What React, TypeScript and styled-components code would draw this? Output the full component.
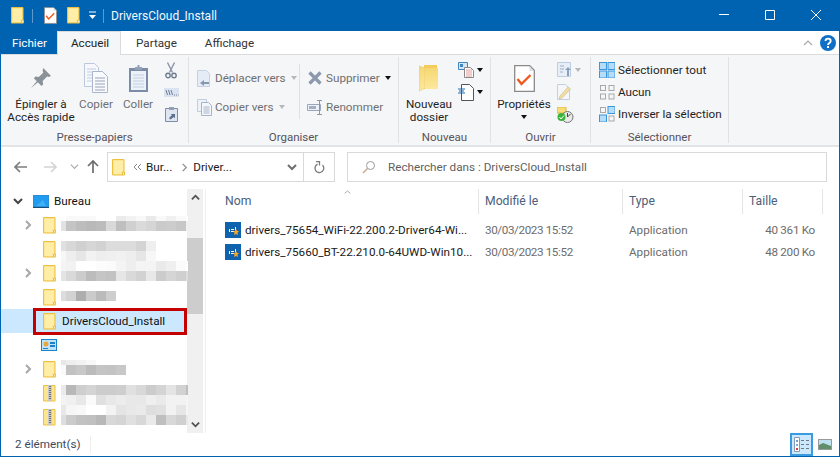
import React from 'react';
import styled, { createGlobalStyle } from 'styled-components';

const Global = createGlobalStyle`
  html, body { margin: 0; padding: 0; background: #fff; }
  body { font-family: "Roboto", "Open Sans", "Liberation Sans", sans-serif; font-size: 11.7px; color: #1a1a1a; }
  svg { display: block; flex: none; }
`;

const Window = styled.div`
  width: 840px;
  height: 457px;
  box-sizing: border-box;
  border: 1px solid #0063b1;
  border-top: 0;
  display: flex;
  flex-direction: column;
  overflow: hidden;
  background: #fff;
`;

const Gap = styled.div`
  width: ${p => p.$w}px;
  flex: none;
`;

/* title bar */
const TitleBar = styled.div`
  height: 31px;
  flex: none;
  background: #0063b1;
  display: flex;
  align-items: center;
  padding-left: 10px;
  color: #fff;
`;
const QuickSep = styled.div`
  width: 1px;
  height: 14px;
  background: #5d9ad0;
  margin: ${p => p.$margin};
`;
const TitleText = styled.div`
  font-size: 12px;
  margin-left: 7px;
  color: #f4f8fc;
`;
const WindowControls = styled.div`
  margin-left: auto;
  display: flex;
  height: 100%;
`;
const ControlBtn = styled.div`
  width: 46px;
  height: 100%;
  display: flex;
  align-items: center;
  justify-content: center;
  padding-bottom: 2px;
  box-sizing: border-box;
`;

/* tabs */
const TabRow = styled.div`
  height: 24px;
  flex: none;
  box-sizing: border-box;
  border-bottom: 1px solid #dadbdc;
  display: flex;
  align-items: stretch;
`;
const FileTab = styled.div`
  width: 56px;
  height: 23px;
  background: #0063b1;
  color: #fff;
  padding-left: 11px;
  box-sizing: border-box;
  line-height: 24px;
`;
const Tab = styled.div`
  padding: 0 14px;
  line-height: 24px;
  color: #333;
  height: 23px;
  box-sizing: border-box;
  ${p => p.$active && `
    height: 24px;
    background: #f5f6f7;
    border: 1px solid #dadbdc;
    border-bottom: 0;
    color: #222;
    width: 64px;
    padding: 0 13px;
    line-height: 23px;
    margin-right: 1px;
  `}
`;
const TabTools = styled.div`
  margin-left: auto;
  display: flex;
  align-items: center;
  gap: 7px;
  padding-right: 3px;
`;

/* ribbon */
const Ribbon = styled.div`
  height: 92px;
  flex: none;
  box-sizing: border-box;
  background: #f5f6f7;
  border-bottom: 2px solid #e3e4e5;
  display: flex;
  padding-top: 2px;
`;
const Group = styled.div`
  width: ${p => p.$width}px;
  height: 86px;
  box-sizing: border-box;
  border-right: 1px solid #e1e2e3;
  display: flex;
  flex-direction: column;
  flex: none;
`;
const GroupBody = styled.div`
  flex: 1;
  display: flex;
  min-height: 0;
  padding-left: ${p => p.$pad || 0}px;
`;
const GroupLabel = styled.div`
  height: 12px;
  text-align: center;
  color: #57535a;
  line-height: 13px;
  font-size: 11.5px;
`;
const BigButton = styled.div`
  width: ${p => p.$width}px;
  flex: none;
  display: flex;
  flex-direction: column;
  align-items: center;
  text-align: center;
  line-height: 13px;
  color: ${p => (p.$off ? '#6f6f72' : '#1f1f1f')};
`;
const BigIcon = styled.div`
  height: 39px;
  margin-bottom: 2px;
  display: flex;
  align-items: center;
  justify-content: center;
  padding-top: 3px;
  box-sizing: border-box;
  width: 100%;
`;
const Caret = styled.div`
  width: 0;
  height: 0;
  border: 3.5px solid transparent;
  border-top: 4px solid ${p => (p.$off ? '#b5b8bc' : '#111')};
  border-bottom: 0;
  margin: ${p => p.$margin || '0 0 0 5px'};
`;
const ToolStack = styled.div`
  display: flex;
  flex-direction: column;
  width: ${p => (p.$width ? `${p.$width}px` : 'auto')};
  padding-top: ${p => p.$top}px;
  gap: ${p => p.$gap}px;
  align-items: ${p => p.$align || 'flex-start'};
  ${p => p.$divide && `
    height: 55px;
    margin-top: 7px;
    padding-top: 5px;
    gap: 11px;
    border-right: 1px solid #dfe0e1;
    box-sizing: border-box;
  `}
`;
const SmallTool = styled.div`
  display: flex;
  align-items: center;
  height: ${p => p.$h || 18}px;
  padding-left: ${p => p.$indent || 0}px;
  color: ${p => (p.$off ? '#6f6f72' : '#1f1f1f')};
  white-space: nowrap;
`;
const ToolLabel = styled.span`
  margin-left: ${p => p.$gap ?? 3}px;
`;

/* address bar */
const AddressRow = styled.div`
  height: 42px;
  flex: none;
  display: flex;
  align-items: flex-start;
  padding-top: 5px;
  box-sizing: border-box;
`;
const NavArrows = styled.div`
  width: 106px;
  height: 29px;
  flex: none;
  display: flex;
  align-items: center;
  padding-left: 13px;
  box-sizing: border-box;
`;
const AddressBox = styled.div`
  width: 228px;
  height: 30px;
  flex: none;
  box-sizing: border-box;
  border: 1px solid #d9d9d9;
  display: flex;
  align-items: center;
  padding-left: 4px;
  color: #1a1a1a;
`;
const Crumb = styled.span`
  margin-left: ${p => p.$left}px;
  white-space: nowrap;
`;
const RefreshCell = styled.div`
  width: 30px;
  height: 100%;
  margin-left: auto;
  border-left: 1px solid #d9d9d9;
  display: flex;
  align-items: center;
  justify-content: center;
`;
const SearchBox = styled.div`
  width: 480px;
  height: 30px;
  margin-left: 12px;
  box-sizing: border-box;
  border: 1px solid #d9d9d9;
  display: flex;
  align-items: center;
  padding-left: 14px;
  color: #5f5f5f;
`;

/* main */
const Main = styled.div`
  flex: 1;
  display: flex;
  min-height: 0;
`;
const NavPane = styled.div`
  width: 205px;
  flex: none;
  box-sizing: border-box;
  border-right: 1px solid #efefef;
  display: flex;
  padding-right: 2px;
`;
const NavList = styled.div`
  width: 186px;
  flex: none;
`;
const NavRow = styled.div`
  position: relative;
  height: 24px;
  display: flex;
  align-items: center;
  padding-left: ${p => p.$indent}px;
  background: ${p => (p.$selected ? '#cce8ff' : 'transparent')};
  color: #111;
`;
const Twisty = styled.div`
  width: 14px;
  height: 14px;
  margin-right: 8px;
  flex: none;
  display: flex;
  align-items: center;
  justify-content: center;
`;
const NavLabel = styled.span`
  margin-left: ${p => p.$left}px;
  white-space: nowrap;
`;
const RedFrame = styled.div`
  position: absolute;
  left: 32px;
  top: -1px;
  width: 154px;
  height: 27px;
  box-sizing: border-box;
  border: 3px solid #c40000;
`;
const Mosaic = styled.div`
  align-self: flex-start;
  margin-top: ${p => p.$top}px;
  margin-left: 5px;
  width: 127px;
  flex: none;
  overflow: hidden;
`;
const MosaicLine = styled.div`
  display: flex;
  height: ${p => p.$h || 10}px;
`;
const MosaicCell = styled.div`
  width: 10px;
  flex: none;
  background: rgb(${p => p.$v}, ${p => p.$v}, ${p => p.$v});
  &:first-child { width: 5px; }
`;
const ScrollBar = styled.div`
  width: 16px;
  flex: none;
  background: #f0f0f0;
  display: flex;
  flex-direction: column;
  align-items: center;
`;
const ScrollEnd = styled.div`
  height: 17px;
  flex: none;
  display: flex;
  align-items: center;
  justify-content: center;
`;
const ScrollTrack = styled.div`
  flex: 1;
  width: 100%;
  padding-top: 32px;
  box-sizing: border-box;
`;
const ScrollThumb = styled.div`
  height: 76px;
  background: #cdcdcd;
`;

const FilePane = styled.div`
  position: relative;
  flex: 1;
  padding-left: 12px;
`;
const COLUMNS = '261px 144px 120px 80px';
const HeaderRow = styled.div`
  display: grid;
  grid-template-columns: ${COLUMNS};
  height: 25px;
  margin-bottom: 5px;
`;
const HeaderCell = styled.div`
  padding-left: ${p => p.$pad || 6}px;
  border-right: 1px solid #e5e5e5;
  line-height: 25px;
  color: #4c607a;
  font-size: 12.2px;
`;
const SortCaret = styled.div`
  position: absolute;
  left: 137px;
  top: 0;
`;
const FileRow = styled.div`
  display: grid;
  grid-template-columns: ${COLUMNS};
  height: 22px;
  align-items: center;
  color: #6d6d6d;
`;
const FileName = styled.div`
  display: flex;
  align-items: center;
  padding-left: 7px;
  color: #1a1a1a;
  white-space: nowrap;
`;
const FileCell = styled.div`
  padding-left: 6px;
  white-space: nowrap;
  letter-spacing: ${p => p.$tight || 0}px;
`;
const SizeCell = styled.div`
  text-align: right;
  padding-right: 8px;
  letter-spacing: -0.3px;
`;

/* status bar */
const StatusBar = styled.div`
  height: 23px;
  flex: none;
  display: flex;
  align-items: center;
  padding-left: 14px;
  color: #3f4a5c;
`;
const StatusText = styled.div`
  width: 75px;
  height: 17px;
  line-height: 17px;
  border-right: 1px solid #eee;
`;
const ViewButtons = styled.div`
  margin-left: auto;
  height: 100%;
  display: flex;
  align-items: center;
  padding-right: 3px;
`;
const ViewButton = styled.div`
  width: 23px;
  height: 23px;
  box-sizing: border-box;
  display: flex;
  align-items: center;
  justify-content: center;
  ${p => p.$on && 'background: #cce8ff; border: 2px solid #3a9be0;'}
`;

/* icons */
const Folder = () => (
  <svg width={13} height={17} viewBox="0 0 13 17">
    <path d="M.5.5h11.500v12.500h-1v3H.5z" fill="#fde58f" stroke="#ecc040" />
    <path d="M2 2h9v10H9.500v3H2z" fill="#ffeea8" />
    <path d="M10.500 13.500v2.500h2v-3z" fill="#fff3c4" stroke="#ecc040" />
  </svg>
);
const ZipFolder = () => (
  <svg width={13} height={17} viewBox="0 0 13 17">
    <path d="M.5.5h11.500v15.500H.5z" fill="#fde58f" stroke="#ecc040" />
    <path d="M5 0h4v16H5z" fill="#c9c9c9" />
    <path d="M6 1h2v1H6zM6 3h2v1H6zM6 5h2v1H6zM6 7h2v1H6zM6 9h2v1H6zM6 11h2v1H6zM6 13h2v1H6z" fill="#6f6f6f" />
  </svg>
);
const CheckPage = ({ w = 13, h = 17 }: { w?: number; h?: number }) => (
  <svg width={w} height={h} viewBox="0 0 21 27">
    <path d="M.7.7h15l4.600 4.600v21H.7z" fill="#fff" stroke="#8a8a8a" strokeWidth="1.300" />
    <path d="M15.500 1v5h4.500z" fill="#ddd" />
    <path d="M3.500 14l4 5 9-9" fill="none" stroke="#f0591e" strokeWidth="2.400" />
  </svg>
);
const DropGlyph = () => (
  <svg width={9} height={10} viewBox="0 0 9 10">
    <path d="M1 1h7" stroke="#fff" />
    <path d="M1 4h7L4.500 8z" fill="#fff" />
  </svg>
);
const Chevron = ({ d, color = '#808080', w = 10, h = 10, sw = 2 }: { d: string; color?: string; w?: number; h?: number; sw?: number }) => (
  <svg width={w} height={h} viewBox="0 0 10 10">
    <path d={d} fill="none" stroke={color} strokeWidth={sw} />
  </svg>
);
const PinIcon = () => (
  <svg width={22} height={22} viewBox="0 0 20 20">
    <path d="M12 1l7 7-1.500 1.200-2-.5-4 4 .5 3-1.500 1.500-7-7L5 8.700l3 .5 4-4-.5-2z" fill="#8a9298" />
    <path d="M6.500 12.500L1 19l6.500-5.300z" fill="#8a9298" />
  </svg>
);
const CopyIcon = () => (
  <svg width={24} height={30} viewBox="0 0 24 30">
    <path d="M.5.5h10l4 4v19H.5z" fill="#f5f8fc" stroke="#bcc8da" />
    <path d="M3 6h9M3 9h9M3 12h9M3 15h9M3 18h9" stroke="#c6cedb" />
    <path d="M8.500 8.500h10l5 5v16h-15z" fill="#f8fafd" stroke="#a9b6cb" />
    <path d="M11 15h10M11 18h10M11 21h10M11 24h10M11 27h10" stroke="#98a4b8" />
  </svg>
);
const PasteIcon = () => (
  <svg width={21} height={29} viewBox="0 0 21 29">
    <path d="M1 4h19v24H1z" fill="#7b8ca8" />
    <path d="M3 7h15v19H3z" fill="#edf1f8" />
    <path d="M5 11h11M5 14h11M5 17h11M5 20h11M5 23h11" stroke="#c3cfe1" />
    <path d="M7 3h2.500V1h2v2H14v3H7z" fill="#93a0b5" />
  </svg>
);
const ScissorsIcon = () => (
  <svg width={12} height={17} viewBox="0 0 12 17">
    <path d="M2.500 .5l5 10M9.500 .5l-5 10" stroke="#8794a8" strokeWidth="1.400" fill="none" />
    <circle cx="3" cy="13.500" r="2.200" fill="none" stroke="#6f7d92" strokeWidth="1.400" />
    <circle cx="9" cy="13.500" r="2.200" fill="none" stroke="#6f7d92" strokeWidth="1.400" />
  </svg>
);
const PathIcon = () => (
  <svg width={15} height={9} viewBox="0 0 15 9">
    <path d="M0 0h15v9H0z" fill="#dbe3f0" />
    <path d="M2 2l1.500 5M4.500 2L6 7M7 2l1.500 5" stroke="#6e7f99" />
    <path d="M10 7h1M12 7h1M14 7h.5" stroke="#6e7f99" />
  </svg>
);
const ShortcutIcon = () => (
  <svg width={13} height={16} viewBox="0 0 13 16">
    <path d="M.5 2.500h12v13H.5z" fill="#dfe6f1" stroke="#7e8da6" />
    <path d="M4 1h5v3H4z" fill="#93a0b5" />
    <path d="M4 12l3-3-1.500-1H10v4.500L8.800 11 5.500 13.500z" fill="#5c6f8d" />
  </svg>
);
const MoveIcon = () => (
  <svg width={13} height={17} viewBox="0 0 13 17">
    <path d="M.5.5h9l3 3v13H.5z" fill="#e6ecf6" stroke="#c6d1e2" />
    <path d="M12 12H7V10L3 13l4 3v-2h5z" fill="#8798b2" />
  </svg>
);
const CopyToIcon = () => (
  <svg width={15} height={17} viewBox="0 0 15 17">
    <path d="M.5.5h9v12H.5z" fill="#eef2f8" stroke="#c2cddd" />
    <path d="M4.500 3.500h7l3 3v10h-10z" fill="#f3f6fa" stroke="#a7b3c6" />
    <path d="M6.500 8h6M6.500 10h6M6.500 12h6M6.500 14h6" stroke="#a9b5c8" />
  </svg>
);
const DeleteIcon = () => (
  <svg width={14} height={14} viewBox="0 0 14 14">
    <path d="M1.500 1.500l11 11M12.500 1.500l-11 11" stroke="#8c99ad" strokeWidth="3.200" />
  </svg>
);
const RenameIcon = () => (
  <svg width={16} height={15} viewBox="0 0 16 15">
    <path d="M.5 4.500h13v6H.5z" fill="#eef2f8" stroke="#9aa7bb" />
    <path d="M2 6h7v3H2z" fill="#a3afc2" />
    <path d="M10 .5h5M10 14.500h5M12.500 .5v14" stroke="#8896ab" />
  </svg>
);
const NewFolderIcon = () => (
  <svg width={20} height={28} viewBox="0 0 20 28">
    <defs>
      <linearGradient id="nf" x1="0" y1="0" x2="0" y2="1">
        <stop offset="0" stopColor="#f6d873" />
        <stop offset="1" stopColor="#fce79c" />
      </linearGradient>
    </defs>
    <path d="M5 1h13v24H5z" fill="#f3cc5c" />
    <path d="M0 2l6 2v20l-6 3z" fill="url(#nf)" stroke="#e6c25a" strokeWidth=".5" />
    <path d="M6 4l13 0v21H6z" fill="url(#nf)" />
  </svg>
);
const NewItemIcon = () => (
  <svg width={16} height={16} viewBox="0 0 16 16">
    <path d="M.5.500h9v7H.5z" fill="#d7e6f4" stroke="#3f87c0" />
    <path d="M2 2h3v3H2z" fill="#3f87c0" />
    <path d="M6.500 5.500h6l3 3v7h-9z" fill="#fff" stroke="#888" />
    <path d="M8 8h6M8 10h6M8 12h6M8 14h6" stroke="#e29a9a" />
  </svg>
);
const EasyAccessIcon = () => (
  <svg width={16} height={17} viewBox="0 0 16 17">
    <path d="M3.500.5h8l4 4v12h-12z" fill="#fff" stroke="#555" />
    <path d="M0 5h7M1 7h5M0 9h7" stroke="#1f6fb5" />
  </svg>
);
const OpenIcon = () => (
  <svg width={14} height={15} viewBox="0 0 14 15">
    <path d="M.5.500h13v14H.5z" fill="#e8eef7" stroke="#bfcde0" />
    <path d="M3 4h4M3 7h4M3 10h3" stroke="#9eb0c9" />
    <path d="M10 14V8H8l3-3 3 3h-2v6z" fill="#8aa0bf" />
  </svg>
);
const EditIcon = () => (
  <svg width={14} height={16} viewBox="0 0 14 16">
    <path d="M.5.500h8l4 4v11H.5z" fill="#f4f6fa" stroke="#c4cfdf" />
    <path d="M3 12l8-9 2.500 2L5 14l-3 1z" fill="#f2dfa0" stroke="#c7b888" strokeWidth=".6" />
  </svg>
);
const HistoryIcon = () => (
  <svg width={17} height={16} viewBox="0 0 17 16">
    <path d="M0 0h9v6H0z" fill="#f7dc77" stroke="#d9b93d" />
    <circle cx="10.500" cy="10" r="5.500" fill="#e9e9e9" stroke="#777" />
    <path d="M10.500 10l3-3M10.500 6v4" stroke="#444" />
    <circle cx="4.500" cy="10" r="4" fill="#3cb43c" />
    <path d="M2.500 10l1.500 2 3-3.500" stroke="#fff" fill="none" />
  </svg>
);
const GridIcon = ({ on }: { on: boolean[] }) => (
  <svg width={16} height={16} viewBox="0 0 16 16">
    {[[0, 0], [8.500, 0], [0, 8.500], [8.500, 8.500]].map(([x, y], i) => (
      <rect
        key={i}
        x={x + (on[i] ? 0.5 : 1.5)}
        y={y + (on[i] ? 0.5 : 1.5)}
        width={on[i] ? 7 : 5}
        height={on[i] ? 7 : 5}
        fill={on[i] ? '#b5dcf8' : '#f5f6f7'}
        stroke={on[i] ? '#3a96dd' : '#a9a9a9'}
      />
    ))}
  </svg>
);
const HelpIcon = () => (
  <svg width={16} height={16} viewBox="0 0 16 16">
    <circle cx="8" cy="8" r="8" fill="#0f6fc6" />
    <path d="M5.500 6c0-3.200 5.200-3.200 5.200 0 0 2-2.700 1.800-2.700 4" stroke="#fff" strokeWidth="1.800" fill="none" />
    <path d="M7 11h2v2H7z" fill="#fff" />
  </svg>
);
const BackIcon = ({ color, flip }: { color: string; flip?: boolean }) => (
  <svg width={13} height={12} viewBox="0 0 13 12">
    <path d={flip ? 'M7 1l5 5-5 5M12 6H0' : 'M6 1L1 6l5 5M1 6h12'} fill="none" stroke={color} strokeWidth="1.700" />
  </svg>
);
const UpIcon = () => (
  <svg width={12} height={13} viewBox="0 0 12 13">
    <path d="M1 6l5-5 5 5M6 1v12" fill="none" stroke="#6d6d6d" strokeWidth="1.700" />
  </svg>
);
const RefreshIcon = () => (
  <svg width={11} height={13} viewBox="0 0 11 13">
    <path d="M8.500 4A4.400 4.400 0 1 1 3.500 3.200" fill="none" stroke="#7a7a7a" strokeWidth="1.300" />
    <path d="M2 .5h3.500v4" fill="none" stroke="#7a7a7a" strokeWidth="1.300" />
  </svg>
);
const SearchIcon = () => (
  <svg width={14} height={14} viewBox="0 0 14 14">
    <circle cx="8.500" cy="5.500" r="4" fill="none" stroke="#9a9a9a" />
    <path d="M5.500 8.500L1 13" stroke="#c9a27f" strokeWidth="1.200" />
  </svg>
);
const DesktopIcon = () => (
  <svg width={16} height={13} viewBox="0 0 16 13">
    <path d="M0 0h16v12H0z" fill="#2a8fd8" />
    <path d="M1 1h14v10H1z" fill="#1f9bf0" />
    <path d="M3 11l7-6 3 6z" fill="#3fb0f7" />
    <path d="M0 12.500h16" stroke="#14507e" />
  </svg>
);
const PanelIcon = () => (
  <svg width={16} height={12} viewBox="0 0 16 12">
    <path d="M0 0h16v12H0z" fill="#1b82c9" />
    <path d="M1 1h14v10H1z" fill="#bfe3f8" />
    <circle cx="5" cy="5" r="2.500" fill="#e9a73b" />
    <path d="M9 3h5v2H9zM9 6h5v2H9zM2 9h5v1H2z" fill="#1b82c9" />
  </svg>
);
const AppIcon = () => (
  <svg width={16} height={16} viewBox="0 0 16 16">
    <path d="M0 0h16v16H0z" fill="#0f62ad" />
    <path d="M4 7h1v3H4zM6 7h3v1H6zM6 9h3v1H6zM10 5h1v3h-1z" fill="#fff" />
    <path d="M11 7l1 1.800 2 .4-1.500 1.400.5 2.400-2-1-2 1 .5-2.400L8 9.200l2-.4z" fill="#f3a52c" />
  </svg>
);
const DetailsIcon = () => (
  <svg width={15} height={15} viewBox="0 0 15 15">
    <path d="M.5.5h5v14h-5z" fill="#fff" stroke="#8d9aae" />
    <path d="M2 3h2v2H2z" fill="#6aa0d8" />
    <path d="M2 7h2v2H2z" fill="#7fb0e0" />
    <path d="M2 11h2v2H2z" fill="#c44" />
    <path d="M7 3.500h3M12 3.500h3M7 7.500h3M12 7.500h3M7 11.500h3M12 11.500h3" stroke="#6f7884" />
  </svg>
);
const LargeViewIcon = () => (
  <svg width={14} height={11} viewBox="0 0 14 11">
    <path d="M0 0h14v11H0z" fill="#9a9a9a" />
    <path d="M1 1h12v9H1z" fill="#bfe0ee" />
    <path d="M1 6l4-2 8 3v3H1z" fill="#5f8f6a" />
  </svg>
);

/* blurred entries of the tree */
const blurred: { top: number; lines: { h?: number; cells: number[] }[] }[] = [
  { top: 3, lines: [
    { h: 5, cells: [255, 249, 249, 249, 255, 255, 235, 242, 248, 234, 249, 240, 249, 255] },
    { cells: [226, 196, 189, 185, 188, 217, 191, 208, 218, 213, 202, 204, 199, 240] },
  ] },
  { top: 4, lines: [
    { cells: [224, 216, 208, 214, 210, 220, 220, 220, 212, 239] },
    { cells: [247, 238, 230, 242, 238, 239, 241, 238, 230, 247] },
  ] },
  { top: 0, lines: [
    { cells: [244, 242, 255, 255, 252, 251, 244, 238, 244, 244, 234, 239, 251, 255] },
    { cells: [228, 217, 204, 188, 197, 194, 230, 217, 210, 232, 204, 213, 207, 220] },
  ] },
  { top: 6, lines: [{ cells: [221, 210, 174, 203, 187, 206] }] },
];
const blurredLower: typeof blurred = [
  { top: 3, lines: [
    { h: 5, cells: [232, 238, 242, 248] },
    { cells: [250, 194, 200, 187, 196, 195, 200] },
  ] },
  { top: 4, lines: [
    { cells: [234, 184, 206, 212, 204, 204, 206, 224, 216, 204, 212, 228, 210, 190] },
    { cells: [243, 240, 232, 250, 224, 232, 236, 232, 232, 239, 234, 242, 242, 245] },
  ] },
  { top: 0, lines: [
    { cells: [232, 246, 248, 255, 255, 243, 228, 232, 234, 222, 224, 242, 230, 245] },
    { cells: [222, 203, 194, 192, 184, 216, 213, 224, 216, 234, 191, 216, 208, 232] },
  ] },
];

const Blur = ({ item }: { item: (typeof blurred)[number] }) => (
  <Mosaic $top={item.top}>
    {item.lines.map((line, i) => (
      <MosaicLine key={i} $h={line.h}>
        {line.cells.map((v, j) => <MosaicCell key={j} $v={v} />)}
      </MosaicLine>
    ))}
  </Mosaic>
);

const RIGHT = 'M3 1l4 4-4 4';
const DOWN = 'M1 3l4 4 4-4';

const files = [
  { name: 'drivers_75654_WiFi-22.200.2-Driver64-Wi...', date: '30/03/2023 15:52', size: '40 361 Ko' },
  { name: 'drivers_75660_BT-22.210.0-64UWD-Win10...', date: '30/03/2023 15:52', size: '48 200 Ko' },
];

export default function App(): React.ReactElement {
  return (
    <Window>
      <Global />
      <TitleBar>
        <Folder />
        <QuickSep $margin="0 11px 0 8px" />
        <CheckPage />
        <Gap $w={10} />
        <Folder />
        <Gap $w={8} />
        <DropGlyph />
        <QuickSep $margin="0 0 0 6px" />
        <TitleText>DriversCloud_Install</TitleText>
        <WindowControls>
          <ControlBtn>
            <svg width={10} height={1}><path d="M0 .5h10" stroke="#fff" /></svg>
          </ControlBtn>
          <ControlBtn>
            <svg width={10} height={10}><path d="M.5.5h9v9h-9z" fill="none" stroke="#fff" /></svg>
          </ControlBtn>
          <ControlBtn>
            <svg width={10} height={10}><path d="M0 0l10 10M10 0L0 10" stroke="#fff" /></svg>
          </ControlBtn>
        </WindowControls>
      </TitleBar>

      <TabRow>
        <FileTab>Fichier</FileTab>
        <Tab $active>Accueil</Tab>
        <Tab>Partage</Tab>
        <Tab>Affichage</Tab>
        <TabTools>
          <Chevron d="M1 7l4-4 4 4" color="#a9a9a9" sw={1.2} />
          <HelpIcon />
        </TabTools>
      </TabRow>

      <Ribbon>
        <Group $width={188}>
          <GroupBody $pad={4}>
            <BigButton $width={72}>
              <BigIcon><PinIcon /></BigIcon>
              Épingler à<br />Accès rapide
            </BigButton>
            <BigButton $width={38} $off>
              <BigIcon><CopyIcon /></BigIcon>
              Copier
            </BigButton>
            <BigButton $width={46} $off>
              <BigIcon><PasteIcon /></BigIcon>
              Coller
            </BigButton>
            <ToolStack $top={5} $gap={9} $width={20} $align="center">
              <ScissorsIcon />
              <PathIcon />
              <ShortcutIcon />
            </ToolStack>
          </GroupBody>
          <GroupLabel>Presse-papiers</GroupLabel>
        </Group>

        <Group $width={210}>
          <GroupBody $pad={8}>
            <ToolStack $divide $width={103}>
              <SmallTool $off>
                <MoveIcon />
                <ToolLabel $gap={5}>Déplacer vers</ToolLabel>
                <Caret $off />
              </SmallTool>
              <SmallTool $off>
                <CopyToIcon />
                <ToolLabel>Copier vers</ToolLabel>
                <Caret $off />
              </SmallTool>
            </ToolStack>
            <ToolStack $top={12} $gap={11}>
              <SmallTool $off $indent={8}>
                <DeleteIcon />
                <ToolLabel $gap={4}>Supprimer</ToolLabel>
                <Caret />
              </SmallTool>
              <SmallTool $off $indent={7}>
                <RenameIcon />
                <ToolLabel $gap={3}>Renommer</ToolLabel>
              </SmallTool>
            </ToolStack>
          </GroupBody>
          <GroupLabel>Organiser</GroupLabel>
        </Group>

        <Group $width={92}>
          <GroupBody $pad={1}>
            <BigButton $width={58}>
              <BigIcon><NewFolderIcon /></BigIcon>
              Nouveau<br />dossier
            </BigButton>
            <ToolStack $top={4} $gap={4}>
              <SmallTool>
                <NewItemIcon />
                <Caret $margin="0 0 0 3px" />
              </SmallTool>
              <SmallTool>
                <EasyAccessIcon />
                <Caret $margin="0 0 0 3px" />
              </SmallTool>
            </ToolStack>
          </GroupBody>
          <GroupLabel>Nouveau</GroupLabel>
        </Group>

        <Group $width={100}>
          <GroupBody>
            <BigButton $width={66}>
              <BigIcon><CheckPage w={21} h={27} /></BigIcon>
              Propriétés
              <Caret $margin="4px 0 0 0" />
            </BigButton>
            <ToolStack $top={5} $gap={7}>
              <SmallTool $h={15}>
                <OpenIcon />
                <Caret $off $margin="0 0 0 4px" />
              </SmallTool>
              <SmallTool $h={16}><EditIcon /></SmallTool>
              <SmallTool $h={16}><HistoryIcon /></SmallTool>
            </ToolStack>
          </GroupBody>
          <GroupLabel>Ouvrir</GroupLabel>
        </Group>

        <Group $width={138}>
          <GroupBody $pad={8}>
            <ToolStack $top={4} $gap={4}>
              <SmallTool>
                <GridIcon on={[true, true, true, true]} />
                <ToolLabel>Sélectionner tout</ToolLabel>
              </SmallTool>
              <SmallTool>
                <GridIcon on={[false, false, false, false]} />
                <ToolLabel>Aucun</ToolLabel>
              </SmallTool>
              <SmallTool>
                <GridIcon on={[false, true, true, false]} />
                <ToolLabel>Inverser la sélection</ToolLabel>
              </SmallTool>
            </ToolStack>
          </GroupBody>
          <GroupLabel>Sélectionner</GroupLabel>
        </Group>
      </Ribbon>

      <AddressRow>
        <NavArrows>
          <BackIcon color="#7d7d7d" />
          <Gap $w={17} />
          <BackIcon color="#d4d4d4" flip />
          <Gap $w={13} />
          <Chevron d={DOWN} color="#a9a9a9" w={9} h={9} sw={1.3} />
          <Gap $w={8} />
          <UpIcon />
        </NavArrows>
        <AddressBox>
          <Folder />
          <Crumb $left={7}>
            <Chevron d="M5 2L2 5l3 3M9 2L6 5l3 3" color="#8a8a8a" sw={1} />
          </Crumb>
          <Crumb $left={4}>Bur...</Crumb>
          <Crumb $left={8}><Chevron d={RIGHT} color="#8a8a8a" w={9} h={9} sw={1.3} /></Crumb>
          <Crumb $left={4}>Driver...</Crumb>
          <Crumb $left={55}><Chevron d={DOWN} color="#6f6f6f" /></Crumb>
          <RefreshCell><RefreshIcon /></RefreshCell>
        </AddressBox>
        <SearchBox>
          <SearchIcon />
          <Crumb $left={12}>Rechercher dans : DriversCloud_Install</Crumb>
        </SearchBox>
      </AddressRow>

      <Main>
        <NavPane>
          <NavList>
            <NavRow $indent={10}>
              <Twisty><Chevron d={DOWN} color="#444" /></Twisty>
              <DesktopIcon />
              <NavLabel $left={5}>Bureau</NavLabel>
            </NavRow>
            {blurred.map((item, i) => (
              <NavRow $indent={20} key={i}>
                <Twisty>{i % 2 === 0 && <Chevron d={RIGHT} color="#a6a6a6" />}</Twisty>
                <Folder />
                <Blur item={item} />
              </NavRow>
            ))}
            <NavRow $indent={20} $selected>
              <Twisty />
              <Folder />
              <NavLabel $left={6}>DriversCloud_Install</NavLabel>
              <RedFrame />
            </NavRow>
            <NavRow $indent={18}>
              <Twisty />
              <PanelIcon />
            </NavRow>
            {blurredLower.map((item, i) => (
              <NavRow $indent={20} key={i}>
                <Twisty>{i === 0 && <Chevron d={RIGHT} color="#a6a6a6" />}</Twisty>
                {i === 0 ? <Folder /> : <ZipFolder />}
                <Blur item={item} />
              </NavRow>
            ))}
          </NavList>
          <ScrollBar>
            <ScrollEnd><Chevron d="M1 7l4-4 4 4" color="#505050" w={9} h={9} /></ScrollEnd>
            <ScrollTrack><ScrollThumb /></ScrollTrack>
            <ScrollEnd><Chevron d={DOWN} color="#505050" w={9} h={9} /></ScrollEnd>
          </ScrollBar>
        </NavPane>

        <FilePane>
          <SortCaret><Chevron d="M1 6l4-3 4 3" color="#8a8a8a" w={9} h={7} sw={1} /></SortCaret>
          <HeaderRow>
            <HeaderCell $pad={7}>Nom</HeaderCell>
            <HeaderCell>Modifié le</HeaderCell>
            <HeaderCell>Type</HeaderCell>
            <HeaderCell>Taille</HeaderCell>
          </HeaderRow>
          {files.map(file => (
            <FileRow key={file.name}>
              <FileName>
                <AppIcon />
                <NavLabel $left={4}>{file.name}</NavLabel>
              </FileName>
              <FileCell $tight={-0.4}>{file.date}</FileCell>
              <FileCell>Application</FileCell>
              <SizeCell>{file.size}</SizeCell>
            </FileRow>
          ))}
        </FilePane>
      </Main>

      <StatusBar>
        <StatusText>2 élément(s)</StatusText>
        <ViewButtons>
          <ViewButton $on><DetailsIcon /></ViewButton>
          <ViewButton><LargeViewIcon /></ViewButton>
        </ViewButtons>
      </StatusBar>
    </Window>
  );
}
